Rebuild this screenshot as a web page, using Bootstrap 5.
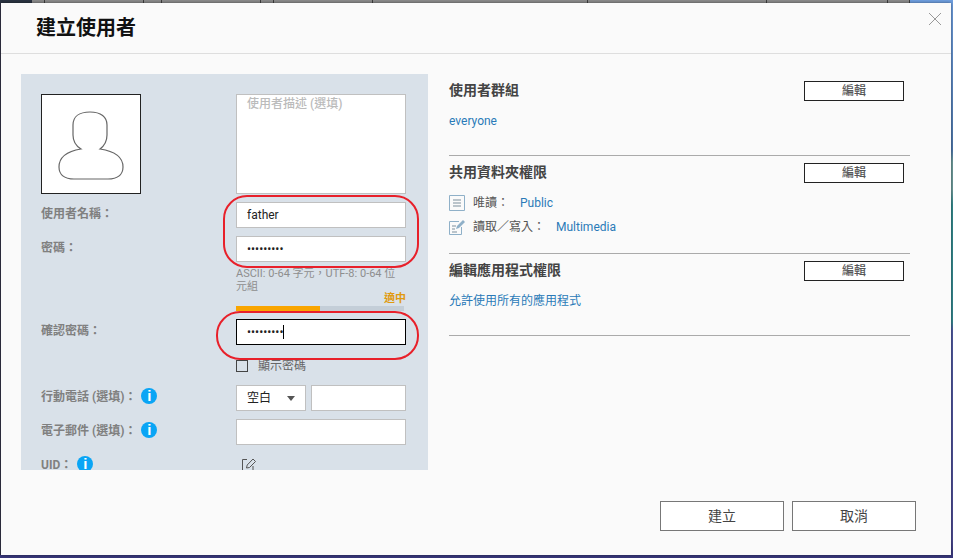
<!DOCTYPE html>
<html lang="zh-Hant">
<head>
  <meta charset="UTF-8">
  <title>建立使用者</title>
  <link href="https://cdn.jsdelivr.net/npm/bootstrap@5.3.0/dist/css/bootstrap.min.css" rel="stylesheet">
  <style>
    html, body { height: 100%; }
    body {
      overflow: hidden;
      font: 12px/1.4 Roboto, "Noto Sans CJK TC", sans-serif;
      color: #555;
      background: linear-gradient(180deg, #6f9fe0 0, #4f78ac 150px, #6f9c9c 162px, #6f9c9c 190px, #348a8e 205px, #35878f 322px, #4f5aa0 330px, #4c4a92 540px, #37367a 558px);
    }
    .strip {
      height: 3px;
      display: grid;
      grid-template-columns: 32px 13px 99px 18px 99px 13px 99px 215px 179px 121px 22px 1fr;
    }
    .strip > div { background: #8b8b8b; border-right: 1px solid #3e3e3e; }
    .strip > div:first-child { background: #2b3442; border: 0; }
    .strip > div:last-child { background: #6f9fe0; border: 0; }

    .dialog {
      width: 950px;
      height: 552px;
      margin-left: 1px;
      background: #fafafa;
      border: 0;
      border-radius: 0;
      box-shadow: -1px 0 0 #2a2a3a, 0 0 3px rgba(0, 0, 0, .5);
    }
    .dialog .modal-header {
      height: 51px;
      padding: 0 9px 0 35px;
      border-bottom: 1px solid #dedede;
      border-radius: 0;
    }
    .dialog .modal-title { font-size: 20px; font-weight: 700; color: #111; line-height: 1; }
    .closer { margin-top: -18px; }
    .dialog .modal-body { padding: 20px 41px 0 20px; }

    .panel-left {
      position: relative;
      width: 407px;
      height: 396px;
      padding: 20px 22px 0 20px;
      overflow: hidden;
      background: #d9e1e9;
      flex: none;
    }
    .form-line { display: flex; align-items: flex-start; margin-bottom: 8px; }
    .form-lbl { width: 195px; height: 22px; padding-top: 2px; flex: none; line-height: 20px; font-weight: 700; color: #808080; display: flex; align-items: center; gap: 5px; }
    .form-fld { width: 170px; flex: none; }
    .phone-pair { display: flex; gap: 5px; }
    .avatar { width: 100px; height: 100px; background: #fff; border: 1px solid #222; flex: none; margin-right: 95px; }
    .avatar svg { display: block; margin: -1px; }

    .dialog .form-control, .dialog .form-select {
      height: 26px;
      min-height: 0;
      padding: 0 10px;
      font-size: 12px;
      line-height: 24px;
      color: #222;
      background-color: #fff;
      border: 1px solid #c0c0c0;
      border-radius: 0;
      box-shadow: none;
    }
    .dialog textarea.form-control { height: 100px; padding-top: 1px; line-height: 16px; resize: none; }
    .dialog .form-control::placeholder { color: #bbb; font-weight: 500; }
    .dialog .is-on { border-color: #000; }
    .dialog .form-select {
      width: 70px;
      flex: none;
      background-image: url("data:image/svg+xml,%3Csvg xmlns='http://www.w3.org/2000/svg' width='8' height='5'%3E%3Cpath d='M0 0h8L4 5z' fill='%23555'/%3E%3C/svg%3E");
      background-size: 8px 5px;
      background-position: right 10px center;
    }
    .caret-bar { position: absolute; left: 47px; top: 6px; width: 1px; height: 14px; background: #000; }

    .pw-help { margin-top: 5px; font-size: 11px; line-height: 13px; color: #8e8e8e; }
    .pw-level { font-size: 11px; line-height: 12px; text-align: right; color: #e09a10; font-weight: 700; }
    .pw-track { width: 168px; height: 5px; margin-top: 1px; background: #c4ced8; }
    .pw-fill { height: 100%; background: #f9a500; }
    .show-pw { display: flex; align-items: center; gap: 10px; margin: 15px 0 13px; line-height: 12px; color: #666; }
    .tick { width: 12px; height: 12px; border: 1px solid #444; flex: none; }
    .info-dot {
      width: 16px; height: 16px; border-radius: 50%; flex: none;
      margin-top: -2px;
      background: #0aa5f5; color: #fff;
      font: 700 15px/16px "Liberation Sans", sans-serif; text-align: center;
    }
    .ring { position: absolute; border: 2px solid #e8202a; border-radius: 24px; pointer-events: none; }
    .ring-a { left: 202px; top: 121px; width: 196px; height: 73px; }
    .ring-b { left: 195px; top: 237px; width: 203px; height: 49px; }

    .panel-right { width: 461px; margin-left: 21px; flex: none; }
    .perm-block { padding-top: 7px; border-bottom: 1px solid #aaa; }
    .perm-block.b1 { padding-bottom: 24px; }
    .perm-block.b2 { padding-bottom: 14px; }
    .perm-block.b3 { padding-bottom: 24px; }
    .perm-head { display: flex; justify-content: space-between; align-items: center; height: 20px; padding-right: 6px; }
    .perm-head h6 { margin: -3px 0 0; font-size: 14px; line-height: 20px; font-weight: 700; color: #444; }
    .dialog .edit-btn {
      width: 100px; height: 20px; padding: 0;
      font-size: 12px; line-height: 18px; color: #555; font-weight: 500;
      background: #fff; border: 1px solid #222; border-radius: 0;
    }
    .perm-link { display: block; line-height: 20px; color: #2a7ab8; text-decoration: none; }
    .b1 .perm-link { margin-top: 10px; }
    .b3 .perm-link { margin-top: 10px; }
    .perm-list { margin-top: 8px; }
    .perm-row { display: flex; align-items: center; height: 24px; }
    .perm-row svg { flex: none; margin-right: 8px; }
    .perm-row span { margin-right: 11px; }
    .perm-row a { color: #2a7ab8; text-decoration: none; }

    .dialog .modal-footer { padding: 0 35px 24px 0; border: 0; gap: 8px; }
    .dialog .modal-footer > * { margin: 0; }
    .dialog .foot-btn {
      width: 124px; height: 30px; padding: 0;
      font-size: 14px; color: #444;
      background: #fff; border: 1px solid #777; border-radius: 0;
    }
  </style>
</head>
<body>
  <div class="strip">
    <div></div><div></div><div></div><div></div><div></div><div></div><div></div><div></div><div></div><div></div><div></div><div></div>
  </div>

  <div class="modal-content dialog d-flex flex-column">
    <div class="modal-header justify-content-between">
      <h5 class="modal-title">建立使用者</h5>
      <svg class="closer" width="14" height="14" viewBox="0 0 14 14"><path d="M1 1l12 12M13 1L1 13" stroke="#999" stroke-width="1" fill="none"/></svg>
    </div>

    <div class="modal-body d-flex flex-grow-1">
      <div class="panel-left">
        <div class="form-line">
          <div class="avatar">
            <svg width="100" height="100" viewBox="0 0 100 100"><path d="M49 18C38 18 32 23 32 31V41C32 47 35 52 40 55C28 57 18 62 18 73C18 81 24 85 33 85H67C76 85 82 81 82 73C82 62 72 57 59 55C63 52 66 47 66 41V31C66 23 60 18 49 18Z" fill="none" stroke="#666" stroke-width="1.2"/></svg>
          </div>
          <div class="form-fld">
            <textarea class="form-control" placeholder="使用者描述 (選填)"></textarea>
          </div>
        </div>

        <div class="form-line">
          <div class="form-lbl">使用者名稱：</div>
          <div class="form-fld"><input type="text" class="form-control" value="father"></div>
        </div>

        <div class="form-line">
          <div class="form-lbl">密碼：</div>
          <div class="form-fld">
            <input type="password" class="form-control" value="123456789">
            <div class="pw-help">ASCII: 0-64 字元，UTF-8: 0-64 位元組</div>
            <div class="pw-level">適中</div>
            <div class="pw-track"><div class="pw-fill w-50"></div></div>
          </div>
        </div>

        <div class="form-line mb-0">
          <div class="form-lbl">確認密碼：</div>
          <div class="form-fld position-relative">
            <input type="password" class="form-control is-on" value="123456789">
            <span class="caret-bar"></span>
          </div>
        </div>
        <div class="d-flex">
          <div class="form-lbl"></div>
          <div class="show-pw"><span class="tick"></span>顯示密碼</div>
        </div>

        <div class="form-line">
          <div class="form-lbl">行動電話 (選填)：<span class="info-dot">i</span></div>
          <div class="form-fld phone-pair">
            <select class="form-select"><option>空白</option></select>
            <input type="text" class="form-control">
          </div>
        </div>

        <div class="form-line">
          <div class="form-lbl">電子郵件 (選填)：<span class="info-dot">i</span></div>
          <div class="form-fld"><input type="text" class="form-control"></div>
        </div>

        <div class="form-line">
          <div class="form-lbl">UID：<span class="info-dot">i</span></div>
          <div class="form-fld">
            <svg class="ms-1 mt-1" width="17" height="17" viewBox="0 0 17 17" fill="none" stroke="#555"><path d="M7 2.5H2.5V15H13V9M6.5 11l.7-3L13 2l2.5 2.5L9.5 10.5z"/></svg>
          </div>
        </div>

        <div class="ring ring-a"></div>
        <div class="ring ring-b"></div>
      </div>

      <div class="panel-right">
        <div class="perm-block b1">
          <div class="perm-head">
            <h6>使用者群組</h6>
            <button type="button" class="btn edit-btn">編輯</button>
          </div>
          <a href="#" class="perm-link">everyone</a>
        </div>

        <div class="perm-block b2">
          <div class="perm-head">
            <h6>共用資料夾權限</h6>
            <button type="button" class="btn edit-btn">編輯</button>
          </div>
          <div class="perm-list">
            <div class="perm-row">
              <svg width="16" height="16" viewBox="0 0 16 16" fill="none" stroke="#8fb0c8"><path d="M.5 .5h15v15H.5z"/><path d="M4 5h8M4 8h8M4 11h8" stroke="#7d8f9c"/></svg>
              <span>唯讀：</span><a href="#">Public</a>
            </div>
            <div class="perm-row">
              <svg width="16" height="16" viewBox="0 0 16 16" fill="none" stroke="#8fb0c8"><path d="M10 2.5H.5v13h12V8"/><path d="M3 7h4M3 10h3M3 13h5" stroke="#7d8f9c"/><path d="M7 10l1-3 6-6 2 2-6 6z" fill="#8fb0c8" stroke="none"/></svg>
              <span>讀取／寫入：</span><a href="#">Multimedia</a>
            </div>
          </div>
        </div>

        <div class="perm-block b3">
          <div class="perm-head">
            <h6>編輯應用程式權限</h6>
            <button type="button" class="btn edit-btn">編輯</button>
          </div>
          <a href="#" class="perm-link">允許使用所有的應用程式</a>
        </div>
      </div>
    </div>

    <div class="modal-footer">
      <button type="button" class="btn foot-btn">建立</button>
      <button type="button" class="btn foot-btn">取消</button>
    </div>
  </div>

  <script src="https://cdn.jsdelivr.net/npm/bootstrap@5.3.0/dist/js/bootstrap.bundle.min.js"></script>
</body>
</html>
